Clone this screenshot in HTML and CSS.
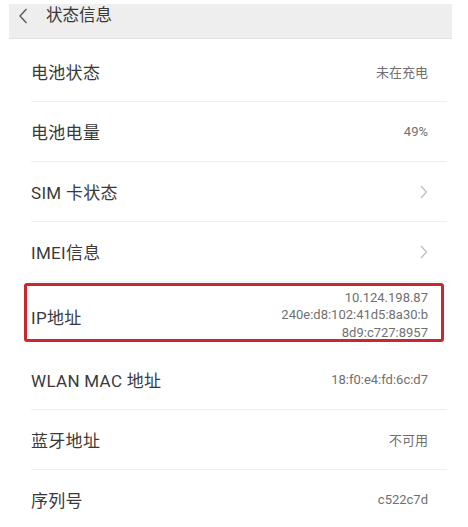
FILE: index.html
```html
<!DOCTYPE html>
<html lang="zh">
<head>
<meta charset="utf-8">
<link rel="stylesheet" href="styles.css">
</head>
<body>
<div class="header">
  <svg class="back" width="10" height="16" viewBox="0 0 10 16"><path d="M8.5 1 L2 8 L8.5 15" fill="none" stroke="#555" stroke-width="1.3"/></svg>
  <span class="title">状态信息</span>
</div>
<div class="list">
  <div class="row"><span class="label">电池状态</span><span class="value">未在充电</span></div>
  <div class="row"><span class="label">电池电量</span><span class="value">49%</span></div>
  <div class="row"><span class="label">SIM 卡状态</span><svg class="chev" width="8" height="14" viewBox="0 0 8 14"><path d="M1 1 L6.5 7 L1 13" fill="none" stroke="#bbb" stroke-width="1.2"/></svg></div>
  <div class="row"><span class="label">IMEI信息</span><svg class="chev" width="8" height="14" viewBox="0 0 8 14"><path d="M1 1 L6.5 7 L1 13" fill="none" stroke="#bbb" stroke-width="1.2"/></svg></div>
  <div class="row ip"><span class="label">IP地址</span><span class="value multi">10.124.198.87<br>240e:d8:102:41d5:8a30:b<br>8d9:c727:8957</span><div class="mark"></div></div>
  <div class="row"><span class="label">WLAN MAC 地址</span><span class="value">18:f0:e4:fd:6c:d7</span></div>
  <div class="row"><span class="label">蓝牙地址</span><span class="value">不可用</span></div>
  <div class="row"><span class="label">序列号</span><span class="value">c522c7d</span></div>
</div>
</body>
</html>
```
FILE: styles.css
```css
html, body {
  margin: 0;
  padding: 0;
  background: #fff;
}
body {
  font-family: Roboto, "Noto Sans CJK SC", sans-serif;
  color: #333;
}
.header {
  margin: 4px 16px 0 9px;
  height: 34px;
  background: #eeeeee;
  border-bottom: 1px solid #e2e2e2;
  display: flex;
  align-items: flex-start;
}
.back {
  margin: 4px 0 0 9px;
}
.title {
  margin-left: 18px;
  font-size: 16.5px;
  line-height: 24px;
  color: #383838;
}
.list {
  margin: 3px 21px 0 31px;
}
.row {
  position: relative;
  height: 59px;
  border-bottom: 1px solid #efefef;
  display: flex;
  align-items: center;
  justify-content: space-between;
  padding-right: 19px;
}
.row.ip {
  height: 68px;
  border-bottom: none;
}
.label {
  font-size: 17px;
  color: #3a3a3a;
  letter-spacing: 0.3px;
}
.value {
  font-size: 13px;
  color: #707070;
  text-align: right;
}
.value.multi {
  line-height: 17.5px;
  margin-top: -2px;
}
.mark {
  position: absolute;
  left: -7px;
  right: 3px;
  top: 1px;
  height: 53px;
  border: 3px solid #c8282e;
  border-radius: 3px;
}
```
